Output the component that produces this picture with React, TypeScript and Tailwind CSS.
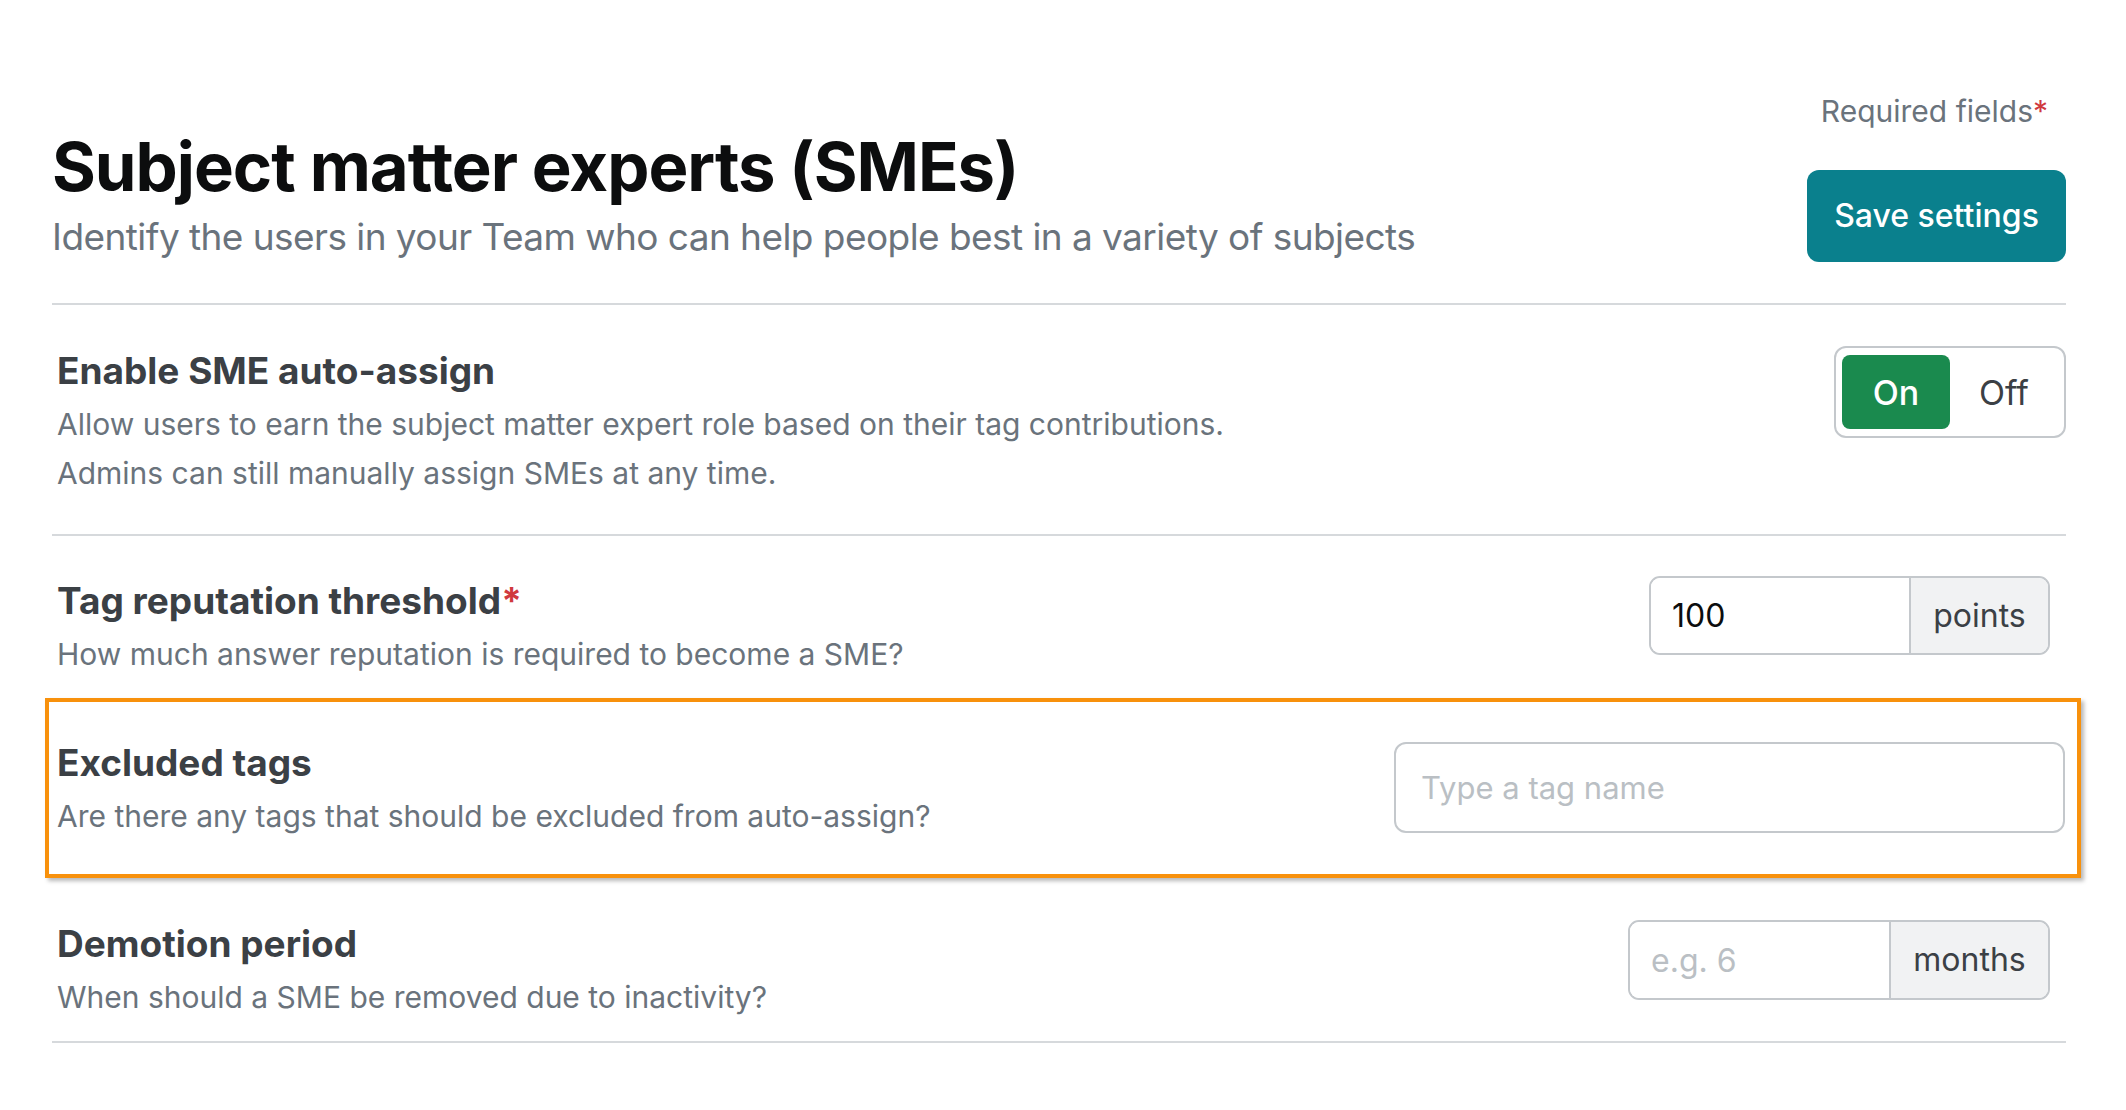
import React from 'react';

type UnitInputProps = {
  value?: string;
  placeholder?: string;
  unit: string;
  className: string;
  inputClassName: string;
};

// Number field with a grey unit suffix on the right
const UnitInput = ({ value, placeholder, unit, className, inputClassName }: UnitInputProps) => (
  <div className={`mr-[16px] flex overflow-hidden rounded-[11px] border-2 border-[#c4c8cc] ${className}`}>
    <input
      readOnly
      value={value}
      placeholder={placeholder}
      className={`h-full border-r-2 border-[#c4c8cc] bg-white pl-[21px] text-[32px] text-[#0c0d0e] outline-none placeholder:text-[#babfc4] ${inputClassName}`}
    />
    <span className="flex flex-1 items-center justify-center bg-[#f1f2f3] text-[32px] text-[#3b4045]">
      {unit}
    </span>
  </div>
);

const FieldText = ({ title, required, lines }: { title: string; required?: boolean; lines: string[] }) => (
  <div>
    <h2 className="text-[37px] font-bold leading-[47px] text-[#3b4045]">
      {title}
      {required && <span className="text-[#d0393e]">*</span>}
    </h2>
    <div className="mt-[6px] text-[30px] leading-[49px] text-[#6a737c]">
      {lines.map((line) => (
        <p key={line}>{line}</p>
      ))}
    </div>
  </div>
);

export default function App() {
  return (
    <div className="min-h-screen bg-white font-[Inter,sans-serif] antialiased">
      <div className="ml-[52px] w-[2014px]">
        {/* Header */}
        <header className="flex justify-between border-b-2 border-[#d6d9dc] pb-[41px] pt-[93px]">
          <div className="mt-[34px]">
            <h1 className="text-[67px] font-bold leading-[80px] tracking-[-0.015em] text-[#0c0d0e]">
              Subject matter experts (SMEs)
            </h1>
            <p className="mt-[6px] text-[37px] leading-[48px] tracking-[-0.015em] text-[#6a737c]">
              Identify the users in your Team who can help people best in a variety of subjects
            </p>
          </div>
          <div className="flex flex-col items-end">
            <p className="mr-[18px] text-[30px] leading-[36px] text-[#6a737c]">
              Required fields<span className="text-[#d0393e]">*</span>
            </p>
            <button className="mt-[41px] h-[92px] w-[259px] rounded-[12px] bg-[#0a808d] text-[32px] font-medium text-white">
              Save settings
            </button>
          </div>
        </header>

        {/* Auto-assign toggle */}
        <section className="flex items-start justify-between border-b-2 border-[#d6d9dc] pb-[36px] pl-[5px] pt-[42px]">
          <FieldText
            title="Enable SME auto-assign"
            lines={[
              'Allow users to earn the subject matter expert role based on their tag contributions.',
              'Admins can still manually assign SMEs at any time.',
            ]}
          />
          <div className="-mt-[1px] flex rounded-[12px] border-2 border-[#c4c8cc] px-[6px] py-[7px]">
            <span className="flex h-[74px] w-[108px] items-center justify-center rounded-[8px] bg-[#1a8a4e] text-[34px] font-medium text-white">
              On
            </span>
            <span className="flex h-[74px] w-[108px] items-center justify-center text-[34px] text-[#3b4045]">
              Off
            </span>
          </div>
        </section>

        {/* Threshold */}
        <section className="flex items-start justify-between pb-[19px] pl-[5px] pt-[41px]">
          <FieldText
            title="Tag reputation threshold"
            required
            lines={['How much answer reputation is required to become a SME?']}
          />
          <UnitInput value="100" unit="points" className="-mt-[1px] h-[79px] w-[401px]" inputClassName="w-[260px]" />
        </section>

        {/* Excluded tags, highlighted */}
        <section className="-ml-[7px] -mr-[15px] border-4 border-[#f8910c] shadow-[3px_3px_4px_rgba(0,0,0,0.28)]">
          <div className="flex items-start justify-between pb-[33px] pl-[8px] pr-[12px] pt-[37px]">
            <FieldText title="Excluded tags" lines={['Are there any tags that should be excluded from auto-assign?']} />
            <input
              placeholder="Type a tag name"
              className="mt-[3px] h-[91px] w-[671px] rounded-[12px] border-2 border-[#c4c8cc] px-[25px] text-[31px] outline-none placeholder:text-[#babfc4]"
            />
          </div>
        </section>

        {/* Demotion */}
        <section className="flex items-start justify-between border-b-2 border-[#d6d9dc] pb-[19px] pl-[5px] pt-[42px]">
          <FieldText title="Demotion period" lines={['When should a SME be removed due to inactivity?']} />
          <UnitInput placeholder="e.g. 6" unit="months" className="h-[80px] w-[422px]" inputClassName="w-[261px]" />
        </section>
      </div>
    </div>
  );
}
